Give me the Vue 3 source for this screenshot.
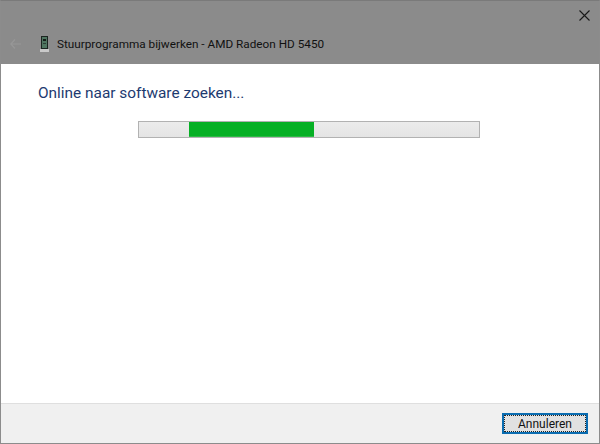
<template>
  <div class="venster">
    <header class="kop">
      <div class="kop-rij">
        <button class="sluiten" aria-label="Sluiten">
          <svg width="11" height="11" viewBox="0 0 11 11">
            <path d="M0.5 0.5L10.5 10.5M10.5 0.5L0.5 10.5" stroke="#1a1a1a" stroke-width="1.1" fill="none" />
          </svg>
        </button>
      </div>
      <div class="kop-titel">
        <svg class="terug" width="11" height="10" viewBox="0 0 11 10">
          <path d="M5 0.5L0.8 5L5 9.5M0.8 5H11" stroke="#979797" stroke-width="1.2" fill="none" />
        </svg>
        <svg class="apparaat" width="9" height="16" viewBox="0 0 9 16">
          <rect x="1" y="0" width="7" height="13" fill="#1b2420" />
          <rect x="2" y="1" width="5" height="11" fill="#4f7560" />
          <rect x="3" y="3" width="3" height="2" fill="#141c18" />
          <rect x="3" y="7" width="3" height="1" fill="#2c4035" />
          <rect x="0" y="13" width="9" height="3" fill="#c9c9c9" />
        </svg>
        <span class="titel">{{ titel }}</span>
      </div>
    </header>

    <main class="inhoud">
      <h1 class="kopje">Online naar software zoeken...</h1>
      <div class="balk">
        <div class="balk-vulling"></div>
      </div>
    </main>

    <footer class="voet">
      <button class="knop">Annuleren</button>
    </footer>
  </div>
</template>

<script setup>
const titel = 'Stuurprogramma bijwerken - AMD Radeon HD 5450'
</script>

<style>
html,
body {
  margin: 0;
  background: #fff;
}
</style>

<style scoped>
.venster {
  width: 600px;
  height: 444px;
  box-sizing: border-box;
  display: flex;
  flex-direction: column;
  border: 1px solid #8c8c8c;
  border-top-color: #7a7a7a;
  font-family: Roboto, "Noto Sans", sans-serif;
  background: #fff;
}

.kop {
  height: 63px;
  flex: none;
  display: flex;
  flex-direction: column;
  background: #8b8b8b;
  box-sizing: border-box;
}

.kop-rij {
  height: 30px;
  display: flex;
  justify-content: flex-end;
  align-items: flex-end;
  padding-right: 9px;
}

.sluiten {
  padding: 0;
  border: none;
  background: none;
  display: flex;
  height: 21px;
}

.kop-titel {
  display: flex;
  align-items: center;
  height: 26px;
  padding-left: 9px;
}

.terug {
  margin-right: 19px;
}

.apparaat {
  margin-right: 8px;
}

.titel {
  font-size: 11.75px;
  color: #111;
  white-space: nowrap;
}

.inhoud {
  flex: 1;
  padding: 19px 37px 0;
  display: flex;
  flex-direction: column;
}

.kopje {
  margin: 0;
  font-size: 15.4px;
  line-height: 20px;
  font-weight: 400;
  color: #1d3a70;
}

.balk {
  align-self: flex-start;
  margin: 18px 0 0 100px;
  width: 342px;
  height: 17px;
  box-sizing: border-box;
  border: 1px solid #b2b2b2;
  background: linear-gradient(#ececec, #e4e4e4);
  display: flex;
  padding-left: 50px;
}

.balk-vulling {
  width: 125px;
  background: #06b025;
  border-bottom: 1px solid #2cba45;
}

.voet {
  height: 40px;
  flex: none;
  box-sizing: border-box;
  background: #f0f0f0;
  border-top: 1px solid #dfdfdf;
  display: flex;
  justify-content: flex-end;
  align-items: flex-start;
  padding: 9px 11px 0 0;
}

.knop {
  width: 86px;
  height: 21px;
  box-sizing: border-box;
  padding: 0;
  border: 2px solid #0a6cb0;
  outline: 1px dotted #222;
  outline-offset: -3px;
  background: #e1e1e1;
  font-family: inherit;
  font-size: 12px;
  color: #111;
}
</style>
